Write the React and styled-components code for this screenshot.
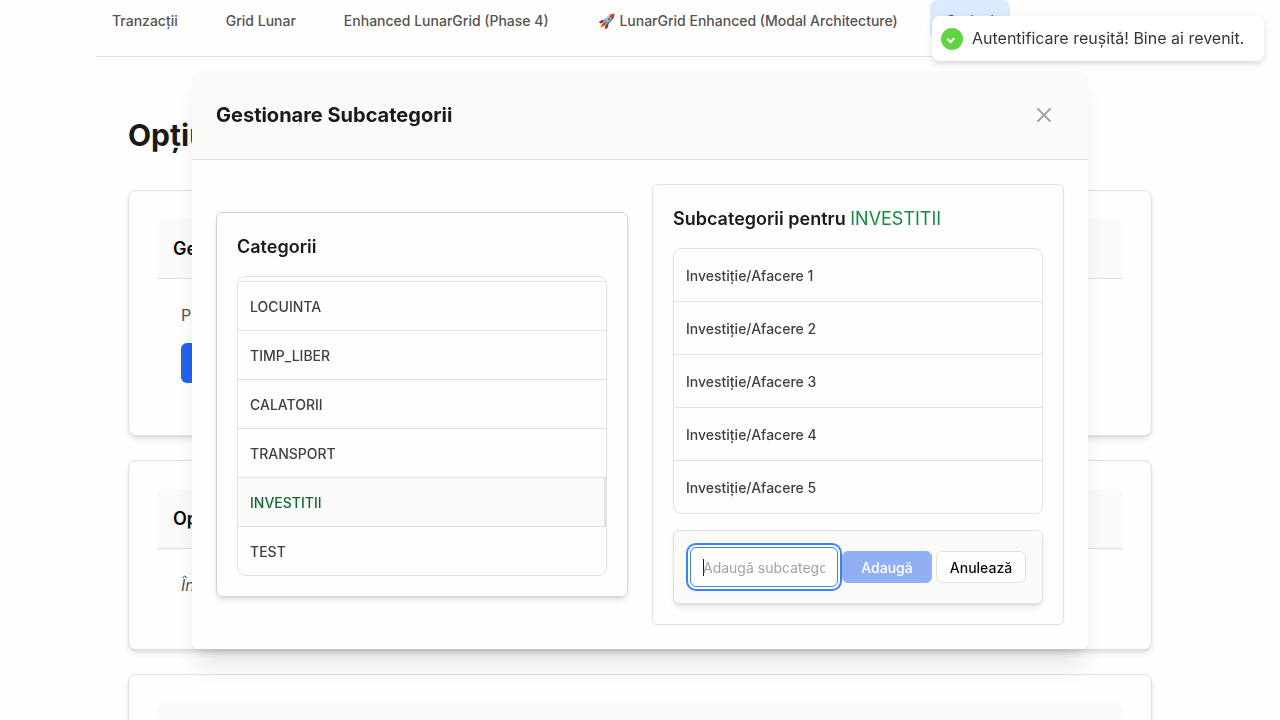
import React from "react";
import styled, { createGlobalStyle, css } from "styled-components";

const GlobalStyle = createGlobalStyle`
  *, *::before, *::after { box-sizing: border-box; }
  html, body { height: 100%; overflow: hidden; }
  body {
    margin: 0;
    background: #fefefe;
    color: #1c1917;
    font-family: Inter, "Noto Sans", sans-serif;
    font-size: 16px;
    line-height: 1.5;
  }
  h1, h2, h3, p { margin: 0; }
  button, input { font-family: inherit; }
`;

const Page = styled.div`
  height: 720px;
  overflow: hidden;
  padding: 0 96px;
`;

const Nav = styled.nav`
  display: flex;
  gap: 16px;
  padding-bottom: 16px;
  border-bottom: 1px solid #e2e2e2;
`;

const NavItem = styled.a`
  padding: 11px 16px 9px;
  border-radius: 8px;
  font-size: 14px;
  line-height: 20px;
  font-weight: 500;
  white-space: nowrap;
  color: ${(p) => (p.$active ? "#2563eb" : "#57534e")};
  background: ${(p) => (p.$active ? "#dbeafe" : "transparent")};
`;

const TabEmoji = styled.span`
  margin: 0 1px;
`;

const Main = styled.main`
  padding: 54px 32px 0;
  display: flex;
  flex-direction: column;
`;

const PageTitle = styled.h1`
  font-size: 30px;
  line-height: 48px;
  font-weight: 700;
  margin-bottom: 31px;
`;

const Card = styled.section`
  padding: 28px;
  margin-bottom: 24px;
  border: 1px solid #e2e2e2;
  border-radius: 8px;
  background: #fefefe;
  box-shadow: 0 4px 6px -1px rgba(0, 0, 0, 0.1), 0 2px 4px -2px rgba(0, 0, 0, 0.1);
`;

const CardHeader = styled.header`
  padding: 16px;
  border-bottom: 1px solid #e2e2e2;
  border-radius: 8px 8px 0 0;
  background: #fafaf9;
`;

const CardTitle = styled.h2`
  font-size: 18px;
  line-height: 27px;
  font-weight: 600;
  color: #0c0a09;
`;

const CardBody = styled.div`
  display: flex;
  flex-direction: column;
  align-items: flex-start;
  gap: 16px;
  padding: 24px;
`;

const CardText = styled.p`
  color: #57534e;
  font-style: ${(p) => (p.$italic ? "italic" : "normal")};
`;

const PrimaryButton = styled.button`
  height: 40px;
  padding: 0 16px;
  border: 0;
  border-radius: 6px;
  background: #2563eb;
  color: #fff;
  font-size: 14px;
  font-weight: 500;
`;

const Overlay = styled.div`
  position: fixed;
  inset: 0;
  display: flex;
  align-items: center;
  justify-content: center;
`;

const Dialog = styled.div`
  width: 896px;
  border-radius: 8px;
  overflow: hidden;
  background: #fefefe;
  box-shadow: 0 20px 25px -5px rgba(0, 0, 0, 0.1), 0 8px 10px -6px rgba(0, 0, 0, 0.1);
  will-change: transform;
`;

const DialogHeader = styled.header`
  display: flex;
  align-items: center;
  justify-content: space-between;
  padding: 24px;
  border-bottom: 1px solid #e2e2e2;
  background: #fafaf9;
`;

const DialogTitle = styled.h2`
  font-size: 20px;
  line-height: 30px;
  font-weight: 700;
`;

const CloseButton = styled.button`
  display: flex;
  padding: 8px;
  border: 0;
  background: transparent;
  color: #a8a29e;
`;

const DialogBody = styled.div`
  display: grid;
  grid-template-columns: 1fr 1fr;
  gap: 24px;
  align-items: center;
  padding: 24px;
`;

const Panel = styled.section`
  display: flex;
  flex-direction: column;
  gap: 16px;
  padding: 20px;
  border: 1px solid #e2e2e2;
  border-radius: 6px;
  box-shadow: 0 1px 2px rgba(0, 0, 0, 0.05);
  ${(p) =>
    p.$raised &&
    css`
      border-color: #d6d3d1;
      box-shadow: 0 4px 6px -1px rgba(0, 0, 0, 0.1), 0 2px 4px -2px rgba(0, 0, 0, 0.1);
    `}
`;

const PanelTitle = styled.h3`
  font-size: 18px;
  line-height: 27px;
  font-weight: 600;
`;

const Accent = styled.span`
  font-weight: 400;
  color: #16893f;
`;

const List = styled.div`
  display: flex;
  flex-direction: column;
  justify-content: flex-end;
  border: 1px solid #e2e2e2;
  border-radius: 8px;
  overflow: hidden;
  height: ${(p) => (p.$scroll ? "300px" : "auto")};
`;

const Row = styled.div`
  flex: none;
  display: flex;
  align-items: center;
  height: ${(p) => p.$height}px;
  padding: 0 12px;
  border-bottom: 1px solid #e2e2e2;
  font-size: 14px;
  font-weight: 500;
  color: #44403c;
  &:last-child {
    height: ${(p) => p.$height - 1}px;
    border-bottom: 0;
  }
  ${(p) =>
    p.$selected &&
    css`
      color: #166534;
      background: #fafaf9;
      border-right: 2px solid #e2e2e2;
    `}
`;

const AddForm = styled.form`
  display: flex;
  align-items: center;
  gap: 4px;
  padding: 12px;
  border: 1px solid #e2e2e2;
  border-radius: 6px;
  background: #fafaf9;
  box-shadow: 0 4px 6px -1px rgba(0, 0, 0, 0.1), 0 2px 4px -2px rgba(0, 0, 0, 0.1);
`;

const FocusedField = styled.div`
  display: flex;
  align-items: center;
  width: 148px;
  height: 40px;
  margin: 4px 0 4px 4px;
  padding: 0 12px;
  border: 1px solid #3b82f6;
  border-radius: 6px;
  background: #fefefe;
  box-shadow: 0 0 0 2px #fefefe, 0 0 0 4px #3b82f6;
`;

const Caret = styled.span`
  flex: none;
  width: 1px;
  height: 17px;
  margin-right: -1px;
  background: #1c1917;
`;

const Placeholder = styled.span`
  overflow: hidden;
  white-space: nowrap;
  padding-top: 2px;
  font-size: 14px;
  line-height: 20px;
  color: #a8a29e;
`;

const SmallButton = styled.button`
  width: 90px;
  height: 32px;
  padding: 0;
  border-radius: 6px;
  font-size: 14px;
  font-weight: 500;
  border: 1px solid ${(p) => (p.$primary ? "#92aff3" : "#e2e2e2")};
  color: ${(p) => (p.$primary ? "#fefefe" : "#0c0a09")};
  background: ${(p) => (p.$primary ? "#92aff3" : "#fefefe")};
`;

const Toast = styled.div`
  position: fixed;
  top: 16px;
  right: 16px;
  display: flex;
  align-items: center;
  width: 332px;
  height: 45px;
  padding: 0 9px;
  border-radius: 8px;
  background: #fff;
  color: #363636;
  box-shadow: 0 3px 10px rgba(0, 0, 0, 0.1), 0 3px 3px rgba(0, 0, 0, 0.05);
  will-change: transform;
`;

const ToastText = styled.span`
  margin-left: 9px;
  white-space: nowrap;
  line-height: 21px;
`;

const CheckBadge = styled.svg`
  flex: none;
  width: 22px;
  height: 22px;
`;

const CheckIcon = () => (
  <CheckBadge viewBox="0 0 22 22">
    <circle cx="11" cy="11" r="11" fill="#61d345" />
    <path d="M6 10.6l3.5 3.4 3.8-3.8" fill="none" stroke="#fff" strokeWidth="2" />
  </CheckBadge>
);

const CloseIcon = () => (
  <svg width="24" height="24" viewBox="0 0 24 24" fill="none" stroke="currentColor" strokeWidth="2" strokeLinecap="round" strokeLinejoin="round">
    <path d="M6 18L18 6M6 6l12 12" />
  </svg>
);

const tabs = [
  { label: "Tranzacții" },
  { label: "Grid Lunar" },
  { label: "Enhanced LunarGrid (Phase 4)" },
  { emoji: "🚀", label: "LunarGrid Enhanced (Modal Architecture)" },
];
const categories = ["LOCUINTA", "TIMP_LIBER", "CALATORII", "TRANSPORT", "INVESTITII", "TEST"];
const selected = "INVESTITII";
const subcategories = [1, 2, 3, 4, 5].map((n) => `Investiție/Afacere ${n}`);

export default function App() {
  return (
    <>
      <GlobalStyle />
      <Page>
        <Nav>
          {tabs.map(({ emoji, label }) => (
            <NavItem key={label}>
              {emoji && <TabEmoji>{emoji}</TabEmoji>}
              {emoji && " "}
              {label}
            </NavItem>
          ))}
          <NavItem $active>Opțiuni</NavItem>
        </Nav>
        <Main>
          <PageTitle>Opțiuni</PageTitle>
          <Card>
            <CardHeader>
              <CardTitle>Gestionare</CardTitle>
            </CardHeader>
            <CardBody>
              <CardText>P</CardText>
              <PrimaryButton aria-label="Gestionare" />
            </CardBody>
          </Card>
          <Card>
            <CardHeader>
              <CardTitle>Opțiuni</CardTitle>
            </CardHeader>
            <CardBody>
              <CardText $italic>În</CardText>
            </CardBody>
          </Card>
          <Card>
            <CardHeader>
              <CardTitle>&nbsp;</CardTitle>
            </CardHeader>
          </Card>
        </Main>
      </Page>

      <Overlay>
        <Dialog role="dialog">
          <DialogHeader>
            <DialogTitle>Gestionare Subcategorii</DialogTitle>
            <CloseButton aria-label="Închide">
              <CloseIcon />
            </CloseButton>
          </DialogHeader>
          <DialogBody>
            <Panel $raised>
              <PanelTitle>Categorii</PanelTitle>
              <List $scroll>
                <Row $height={5} />
                {categories.map((name) => (
                  <Row key={name} $height={49} $selected={name === selected}>
                    {name}
                  </Row>
                ))}
              </List>
            </Panel>
            <Panel>
              <PanelTitle>
                Subcategorii pentru <Accent>{selected}</Accent>
              </PanelTitle>
              <List>
                {subcategories.map((name) => (
                  <Row key={name} $height={53}>
                    {name}
                  </Row>
                ))}
              </List>
              <AddForm>
                <FocusedField>
                  <Caret />
                  <Placeholder>Adaugă subcategorie</Placeholder>
                </FocusedField>
                <SmallButton type="button" $primary>Adaugă</SmallButton>
                <SmallButton type="button">Anulează</SmallButton>
              </AddForm>
            </Panel>
          </DialogBody>
        </Dialog>
      </Overlay>

      <Toast role="status">
        <CheckIcon />
        <ToastText>Autentificare reușită! Bine ai revenit.</ToastText>
      </Toast>
    </>
  );
}
